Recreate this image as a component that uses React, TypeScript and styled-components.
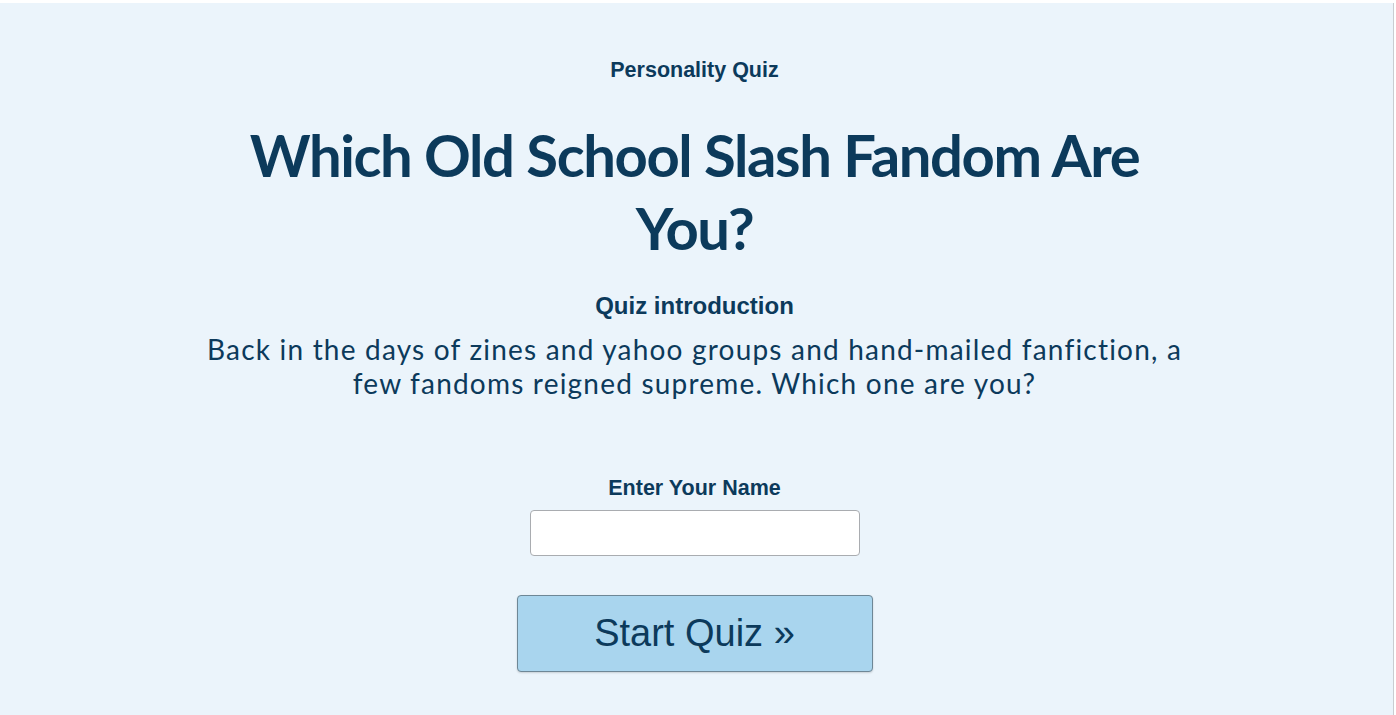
import React from 'react';
import styled, { createGlobalStyle } from 'styled-components';

const GlobalStyle = createGlobalStyle`
  html, body {
    margin: 0;
    padding: 0;
    background: #ffffff;
  }
`;

const Page = styled.div`
  margin-top: 3px;
  margin-right: 2px;
  padding-right: 4px;
  min-height: 712px;
  background-color: #ebf4fb;
  border-right: 1px solid #c9cdd1;
  box-sizing: border-box;
  color: #0c3a5b;
`;

const Content = styled.div`
  display: flex;
  flex-direction: column;
  align-items: center;
  width: 1000px;
  margin: 0 auto;
  padding-top: 55px;
  text-align: center;
`;

const Kicker = styled.div`
  font-family: 'Liberation Sans', Arial, sans-serif;
  font-weight: 700;
  font-size: 21.5px;
  line-height: 25px;
`;

const Title = styled.h1`
  margin: 35px 0 0;
  max-width: 910px;
  font-family: Lato, 'Noto Sans', sans-serif;
  font-weight: 700;
  font-size: 58px;
  letter-spacing: -1.4px;
  line-height: 73px;
`;

const SectionLabel = styled.div<{ size: number; top: number }>`
  margin-top: ${(p) => p.top}px;
  font-family: 'Liberation Sans', Arial, sans-serif;
  font-weight: 700;
  font-size: ${(p) => p.size}px;
  line-height: ${(p) => Math.round(p.size * 1.15)}px;
`;

const Intro = styled.p`
  margin: 12px 0 0;
  width: 990px;
  font-family: Lato, 'Open Sans', sans-serif;
  font-weight: 400;
  font-size: 28px;
  line-height: 34px;
  letter-spacing: 1.2px;
`;

const NameInput = styled.input`
  margin-top: 9px;
  width: 330px;
  height: 46px;
  box-sizing: border-box;
  background: #ffffff;
  border: 1px solid #a9acb0;
  border-radius: 4px;
  font-size: 18px;
  padding: 0 10px;
  outline: none;
`;

const StartButton = styled.button`
  margin-top: 39px;
  width: 356px;
  height: 77px;
  box-sizing: border-box;
  background-color: #a9d5ee;
  border: 1px solid #6e8796;
  border-radius: 4px;
  box-shadow: 0 1px 2px rgba(0, 0, 0, 0.15);
  color: #0c3a5b;
  font-family: 'Liberation Sans', Arial, sans-serif;
  font-size: 38px;
  cursor: pointer;
`;

export default function App() {
  return (
    <>
      <GlobalStyle />
      <Page>
        <Content>
          <Kicker>Personality Quiz</Kicker>
          <Title>Which Old School Slash Fandom Are You?</Title>
          <SectionLabel size={24} top={28}>
            Quiz introduction
          </SectionLabel>
          <Intro>
            Back in the days of zines and yahoo groups and hand-mailed fanfiction, a few
            fandoms reigned supreme. Which one are you?
          </Intro>
          <SectionLabel size={21.5} top={76}>
            Enter Your Name
          </SectionLabel>
          <NameInput type="text" />
          <StartButton>Start Quiz »</StartButton>
        </Content>
      </Page>
    </>
  );
}
